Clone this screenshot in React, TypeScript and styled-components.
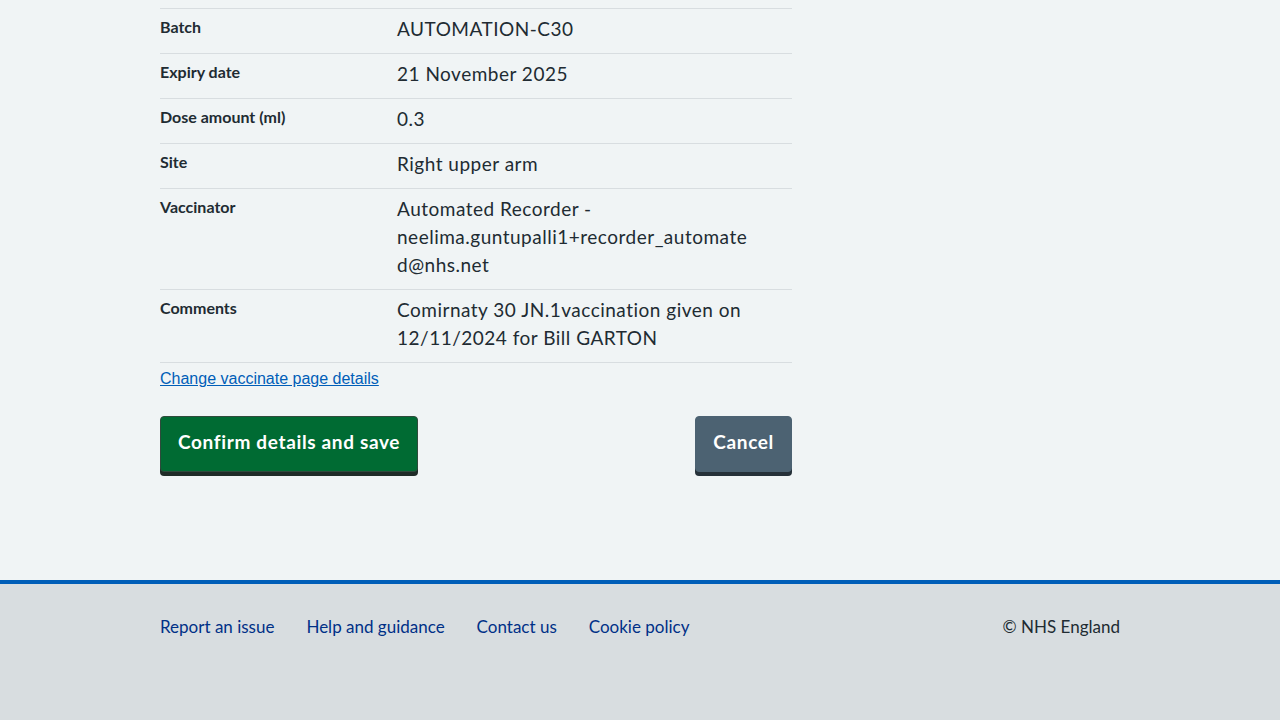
import { createGlobalStyle, styled } from 'styled-components';

const GlobalStyle = createGlobalStyle`
  html, body {
    margin: 0;
    padding: 0;
    background: #f0f4f5;
    font-family: Lato, 'Noto Sans', sans-serif;
    color: #212b32;
  }
  * { box-sizing: border-box; }
`;

interface Row {
  key: string;
  value: string;
}

const rows: Row[] = [
  { key: 'Batch', value: 'AUTOMATION-C30' },
  { key: 'Expiry date', value: '21 November 2025' },
  { key: 'Dose amount (ml)', value: '0.3' },
  { key: 'Site', value: 'Right upper arm' },
  {
    key: 'Vaccinator',
    value: 'Automated Recorder - neelima.guntupalli1+recorder_automated@nhs.net',
  },
  {
    key: 'Comments',
    value: 'Comirnaty 30 JN.1vaccination given on 12/11/2024 for Bill GARTON',
  },
];

const footerLinks = ['Report an issue', 'Help and guidance', 'Contact us', 'Cookie policy'];

export default function App() {
  return (
    <>
      <GlobalStyle />
      <Page>
        <Main>
          <Column>
            <SummaryList>
              {rows.map((row) => (
                <SummaryRow key={row.key}>
                  <Key>{row.key}</Key>
                  <Value>{row.value}</Value>
                </SummaryRow>
              ))}
            </SummaryList>
            <ChangeLink href="#">Change vaccinate page details</ChangeLink>
            <ButtonRow>
              <Button $variant="primary">Confirm details and save</Button>
              <Button $variant="secondary">Cancel</Button>
            </ButtonRow>
          </Column>
        </Main>
        <Footer>
          <FooterInner>
            <FooterLinks>
              {footerLinks.map((link) => (
                <FooterLink key={link} href="#">
                  {link}
                </FooterLink>
              ))}
            </FooterLinks>
            <Copyright>© NHS England</Copyright>
          </FooterInner>
        </Footer>
      </Page>
    </>
  );
}

const Page = styled.div`
  display: flex;
  flex-direction: column;
  min-height: 720px;
`;

const Main = styled.main`
  width: 960px;
  margin: 0 auto;
  padding-top: 8px;
  height: 580px;
`;

const Column = styled.div`
  width: 632px;
  display: flex;
  flex-direction: column;
`;

const SummaryList = styled.dl`
  margin: 0;
  border-top: 1px solid #d8dde0;
`;

const SummaryRow = styled.div`
  display: flex;
  border-bottom: 1px solid #d8dde0;
  padding: 10px 0 10px;
`;

const Key = styled.dt`
  width: 237px;
  flex-shrink: 0;
  font-size: 16px;
  font-weight: 700;
  line-height: 12px;
  padding-top: 2px;
`;

const Value = styled.dd`
  margin: -4px 0 0;
  padding-right: 40px;
  flex: 1;
  font-size: 19px;
  letter-spacing: 0.5px;
  line-height: 28px;
  overflow-wrap: anywhere;
`;

const ChangeLink = styled.a`
  margin-top: 7px;
  font-family: 'Liberation Sans', Arial, sans-serif;
  font-size: 16px;
  line-height: 18px;
  color: #005eb8;
  text-decoration: underline;
  align-self: flex-start;
`;

const ButtonRow = styled.div`
  display: flex;
  justify-content: space-between;
  margin-top: 28px;
`;

const Button = styled.button<{ $variant: 'primary' | 'secondary' }>`
  font-family: Lato, 'Noto Sans', sans-serif;
  font-size: 19px;
  font-weight: 700;
  letter-spacing: 0.65px;
  line-height: 28px;
  color: #ffffff;
  border-radius: 4px;
  padding: 10px 17px 14px;
  height: 56px;
  cursor: pointer;
  background: ${({ $variant }) => ($variant === 'primary' ? '#006b33' : '#4c6272')};
  box-shadow: 0 4px 0
    ${({ $variant }) => ($variant === 'primary' ? '#1f2b27' : '#263139')};
  border: 1px solid
    ${({ $variant }) => ($variant === 'primary' ? '#2f4a3c' : '#4c6272')};
`;

const Footer = styled.footer`
  flex: 1;
  background: #d8dde0;
  border-top: 4px solid #005eb8;
`;

const FooterInner = styled.div`
  width: 960px;
  margin: 0 auto;
  padding-top: 33px;
  display: flex;
  justify-content: space-between;
  align-items: center;
`;

const FooterLinks = styled.div`
  display: flex;
  gap: 32px;
`;

const FooterLink = styled.a`
  font-size: 17px;
  line-height: 20px;
  color: #003087;
  text-decoration: none;
`;

const Copyright = styled.span`
  font-size: 17px;
  line-height: 20px;
  color: #212b32;
`;
